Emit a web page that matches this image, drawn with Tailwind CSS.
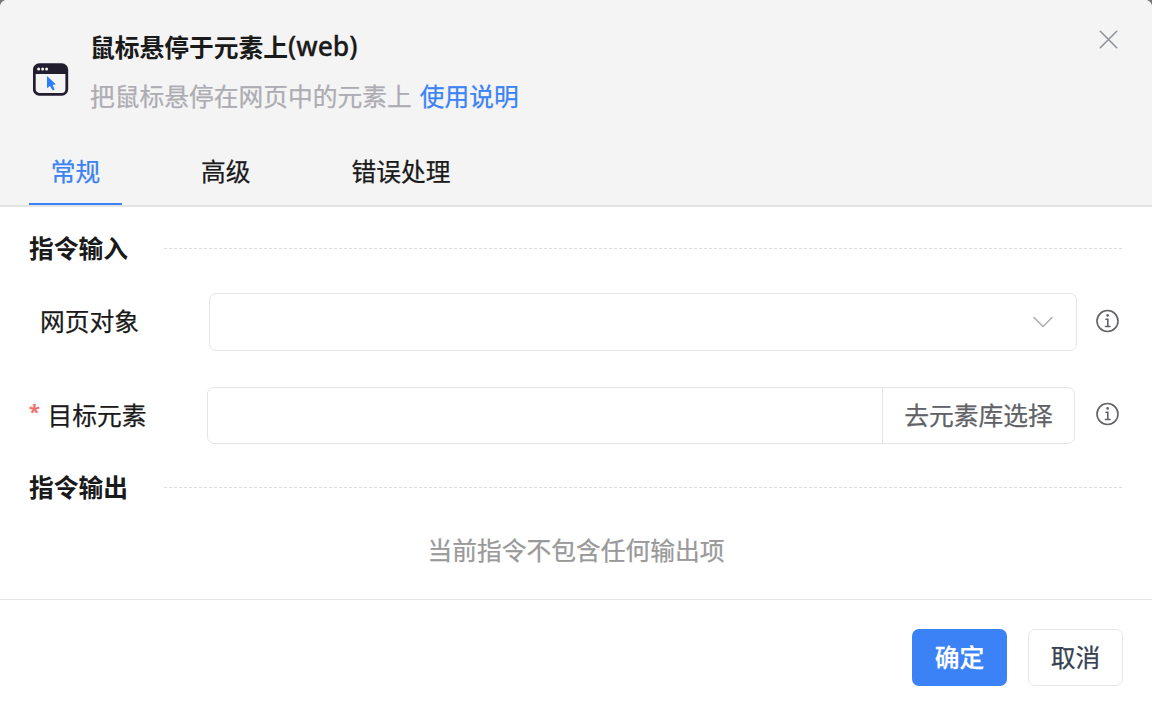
<!DOCTYPE html>
<html lang="zh-CN">
<head>
<meta charset="utf-8">
<title>鼠标悬停于元素上(web)</title>
<script src="https://cdn.jsdelivr.net/npm/@tailwindcss/browser@4"></script>
</head>
<body class="h-[714px] overflow-hidden bg-[#777777] font-['Noto_Sans_CJK_SC',sans-serif] text-[24.75px] leading-[36px] text-[#1a1a1a] [-webkit-text-stroke:0.25px_currentColor]">
<main class="flex h-[714px] flex-col rounded-t-[7px] bg-white">
  <header class="flex h-[207px] flex-col justify-between rounded-t-[7px] border-b-2 border-[#e4e4e4] bg-[#f4f4f4]">
    <div class="flex items-start pl-[33px]">
      <svg class="mt-[63px] h-[33px] w-[36px]" viewBox="0 0 36 33" fill="none">
        <rect x="1.300" y="1.700" width="32.500" height="29.600" rx="5" stroke="#231d30" stroke-width="2.800"/>
        <path d="M1 11V6.500a5 5 0 0 1 5-5h23.500a5 5 0 0 1 5 5V11z" fill="#231d30"/>
        <g fill="#f4f4f4"><circle cx="5.600" cy="6" r="1.500"/><circle cx="9.600" cy="6" r="1.500"/><circle cx="13.600" cy="6" r="1.500"/></g>
        <path d="M14 13v12.300l3-2.300 2.700 4.600 1.900-.9-1.800-4.700 3-.8z" fill="#2b7fff"/>
      </svg>
      <div class="ml-[21px] flex flex-col pt-[28px]">
        <h1 class="flex h-[36px] font-semibold [-webkit-text-stroke:0]">鼠标悬停于元素上<span class="font-['Noto_Sans',sans-serif] text-[26.500px] font-medium [-webkit-text-stroke:0.3px_currentColor]">(web)</span></h1>
        <p class="mt-[13px] flex gap-[8px] text-[#adacb3]"><span>把鼠标悬停在网页中的元素上</span><a class="text-[#3b82f6]">使用说明</a></p>
      </div>
      <svg class="mt-[30px] mr-[34px] ml-auto h-[19px] w-[19px]" viewBox="0 0 19 19" stroke="#909399" stroke-width="1.600" stroke-linecap="round"><path d="M1.300 1.300l16.400 16.400M17.700 1.300L1.300 17.700"/></svg>
    </div>
    <nav class="flex pl-[29px]">
      <div class="h-[53px] w-[93px] border-b-2 border-[#3b82f6] text-center text-[#3b82f6]">常规</div>
      <div class="ml-[79px]">高级</div>
      <div class="ml-[101px]">错误处理</div>
    </nav>
  </header>
  <section class="flex h-[392px] flex-col px-[29px] pt-[23px]">
    <div class="flex items-center">
      <h2 class="w-[135px] pb-[2px] font-bold leading-[34px] [-webkit-text-stroke:0]">指令输入</h2>
      <div class="h-px flex-1 bg-[repeating-linear-gradient(90deg,#dcdcdc_0_3px,transparent_3px_5px)]"></div>
    </div>
    <div class="mt-[27px] flex h-[58px] items-center">
      <label class="w-[180px] pb-[4px] pl-[11px]">网页对象</label>
      <div class="flex h-[58px] w-[868px] items-center justify-end rounded-[7px] border border-[#e5e5e8] pr-[23px]">
        <svg class="h-[12px] w-[20px]" viewBox="0 0 20 12" fill="none" stroke="#a8abb2" stroke-width="1.500" stroke-linecap="round" stroke-linejoin="round"><path d="M1 1.500l9 9 9-9"/></svg>
      </div>
      <svg class="mb-[2px] ml-[19px] h-[24px] w-[24px]" viewBox="0 0 24 24" fill="none" stroke="#606266" stroke-width="1.600"><circle cx="11.500" cy="12" r="10.500"/><circle cx="11.600" cy="6.400" r="1.300" fill="#606266" stroke="none"/><path d="M10 10.200h1.800V17.300M9.500 17.500h4.500" stroke-linecap="round"/></svg>
    </div>
    <div class="mt-[36px] flex h-[57px] items-center">
      <label class="flex w-[178px] pb-[4px]"><span class="w-[18.500px] font-['Noto_Sans',sans-serif] text-[20px] leading-[31px] font-semibold text-[#f56c6c]">*</span>目标元素</label>
      <div class="flex h-[57px] w-[868px] rounded-[7px] border border-[#e5e5e8]">
        <div class="w-[675px] border-r border-[#e5e5e8]"></div>
        <div class="flex flex-1 items-center justify-center pb-[4px] text-[#606266]">去元素库选择</div>
      </div>
      <svg class="mb-[4px] ml-[21px] h-[24px] w-[24px]" viewBox="0 0 24 24" fill="none" stroke="#606266" stroke-width="1.600"><circle cx="11.500" cy="12" r="10.500"/><circle cx="11.600" cy="6.400" r="1.300" fill="#606266" stroke="none"/><path d="M10 10.200h1.800V17.300M9.500 17.500h4.500" stroke-linecap="round"/></svg>
    </div>
    <div class="mt-[25px] flex items-center">
      <h2 class="w-[135px] pb-[2px] font-bold leading-[34px] [-webkit-text-stroke:0]">指令输出</h2>
      <div class="h-px flex-1 bg-[repeating-linear-gradient(90deg,#dcdcdc_0_3px,transparent_3px_5px)]"></div>
    </div>
    <p class="mt-[26px] text-center text-[#999999]">当前指令不包含任何输出项</p>
  </section>
  <footer class="flex flex-1 justify-end gap-[21px] border-t border-[#e4e4e4] pt-[29px] pr-[29px]">
    <button class="h-[57px] w-[95px] rounded-[7px] bg-[#3b82f6] pb-[4px] font-medium text-white">确定</button>
    <button class="h-[57px] w-[95px] rounded-[7px] border border-[#e5e7eb] pb-[4px] text-[#374151]">取消</button>
  </footer>
</main>
</body>
</html>
